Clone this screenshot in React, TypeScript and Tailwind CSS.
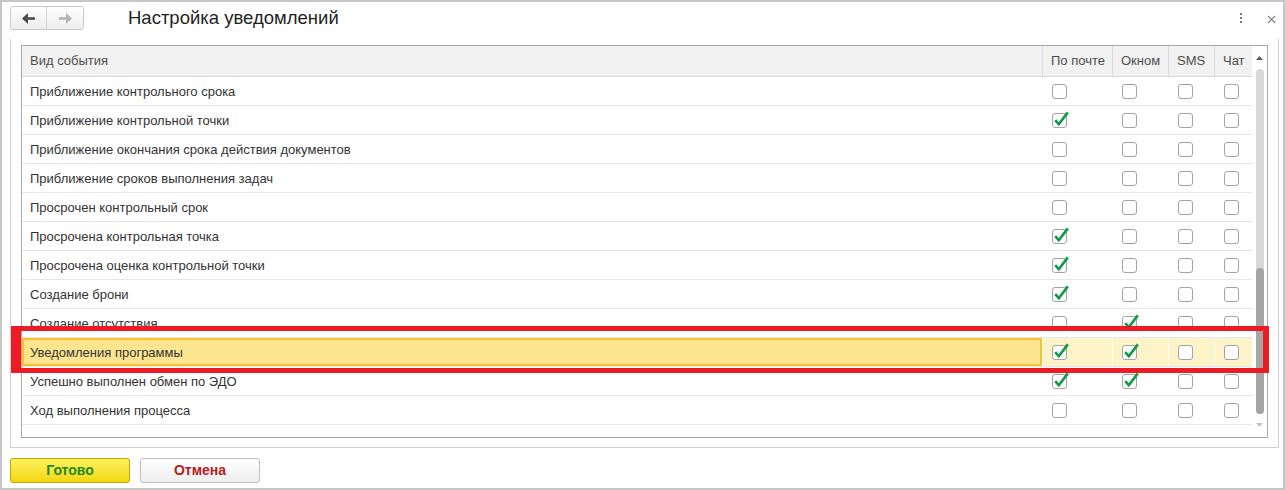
import React from "react";

type Row = { name: string; mail: boolean; win: boolean; sms: boolean; chat: boolean; hl?: boolean };

const rows: Row[] = [
  { name: "Приближение контрольного срока", mail: false, win: false, sms: false, chat: false },
  { name: "Приближение контрольной точки", mail: true, win: false, sms: false, chat: false },
  { name: "Приближение окончания срока действия документов", mail: false, win: false, sms: false, chat: false },
  { name: "Приближение сроков выполнения задач", mail: false, win: false, sms: false, chat: false },
  { name: "Просрочен контрольный срок", mail: false, win: false, sms: false, chat: false },
  { name: "Просрочена контрольная точка", mail: true, win: false, sms: false, chat: false },
  { name: "Просрочена оценка контрольной точки", mail: true, win: false, sms: false, chat: false },
  { name: "Создание брони", mail: true, win: false, sms: false, chat: false },
  { name: "Создание отсутствия", mail: false, win: true, sms: false, chat: false },
  { name: "Уведомления программы", mail: true, win: true, sms: false, chat: false, hl: true },
  { name: "Успешно выполнен обмен по ЭДО", mail: true, win: true, sms: false, chat: false },
  { name: "Ход выполнения процесса", mail: false, win: false, sms: false, chat: false },
];

function Check({ on }: { on: boolean }) {
  return (
    <div className="relative w-[15px] h-[15px] border border-[#a3a3a3] rounded-[3px] bg-white">
      {on && (
        <svg
          className="absolute left-[-1px] top-[-1px] overflow-visible"
          width="15"
          height="15"
          viewBox="0 0 15 15"
        >
          <polyline
            points="3.2,7.2 6.8,11.2 15.8,-0.6"
            fill="none"
            stroke="#13994a"
            strokeWidth="2.7"
          />
        </svg>
      )}
    </div>
  );
}

function Arrow({ dir, color }: { dir: "left" | "right"; color: string }) {
  return (
    <svg width="13" height="11" viewBox="0 0 13 11" style={{ transform: dir === "right" ? "scaleX(-1)" : undefined }}>
      <polygon points="0,5.5 6,0 6,11" fill={color} />
      <rect x="5" y="4.2" width="8" height="2.6" fill={color} />
    </svg>
  );
}

export default function App() {
  return (
    <div className="relative w-[1285px] h-[490px] bg-white border-2 border-[#c6c6c6] flex flex-col font-['Liberation_Sans',Arial,sans-serif] text-[#333] overflow-hidden">
      {/* Top bar */}
      <div className="h-[37px] flex items-start">
        <div className="mt-[4px] ml-[8px] w-[74px] h-[24px] flex border border-[#c9c9c9] rounded-[3px] bg-linear-to-b from-white to-[#ededed]">
          <div className="w-[36px] h-full flex items-center justify-center border-r border-[#d6d6d6]">
            <Arrow dir="left" color="#4b4b4b" />
          </div>
          <div className="flex-1 h-full flex items-center justify-center">
            <Arrow dir="right" color="#b3b3b3" />
          </div>
        </div>
        <div className="ml-[44px] mt-[4px] h-[24px] leading-[24px] text-[18.5px] text-[#1f1f1f]">
          Настройка уведомлений
        </div>
        <div className="ml-auto mt-[11px] flex items-start">
          <div className="flex flex-col gap-[2px] w-[2px] mt-[0px]">
            <div className="w-[2px] h-[2px] bg-[#7a7a7a]" />
            <div className="w-[2px] h-[2px] bg-[#7a7a7a]" />
            <div className="w-[2px] h-[2px] bg-[#7a7a7a]" />
          </div>
          <svg className="ml-[25px] mr-[7px] mt-[2px]" width="9" height="9" viewBox="0 0 9 9">
            <path d="M1 1 L8 8 M8 1 L1 8" stroke="#7d7d7d" strokeWidth="1.1" />
          </svg>
        </div>
      </div>

      {/* Group frame */}
      <div className="ml-[8px] w-[1269px] h-[409px] border-l border-r border-b border-[#cfcfcf] pt-[6px] pl-[10px] pr-[10px] pb-[9px]">
        <div className="w-[1247px] h-[393px] border border-[#a9a9a9] flex">
          <div className="w-[1230px] flex flex-col">
            {/* Header */}
            <div className="h-[31px] flex border-b border-[#d9d9d9] bg-[#f2f2f2] text-[13px] text-[#4d4d4d]">
              <div className="w-[1021px] border-r border-[#dadada] pl-[8px] flex items-center">Вид события</div>
              <div className="w-[70px] border-r border-[#dadada] pl-[8px] flex items-center">По почте</div>
              <div className="w-[56px] border-r border-[#dadada] pl-[8px] flex items-center">Окном</div>
              <div className="w-[46px] border-r border-[#dadada] pl-[8px] flex items-center">SMS</div>
              <div className="w-[37px] pl-[8px] flex items-center">Чат</div>
            </div>
            {/* Rows */}
            {rows.map((r) =>
              r.hl ? (
                <div key={r.name} className="h-[29px] flex border-b border-[#e6e6e6] text-[13px] text-[#333]">
                  <div className="w-[1021px] h-full pr-[1px]">
                    <div className="h-full border-2 border-[#f5c42c] bg-[#fde58f] pl-[6px] pt-[1px] flex items-center">
                      {r.name}
                    </div>
                  </div>
                  <div className="w-[70px] h-full border-r border-white bg-[#fdf3c9] pl-[9px] flex items-center">
                    <Check on={r.mail} />
                  </div>
                  <div className="w-[56px] h-full border-r border-white bg-[#fdf3c9] pl-[9px] flex items-center">
                    <Check on={r.win} />
                  </div>
                  <div className="w-[46px] h-full border-r border-white bg-[#fdf3c9] pl-[9px] flex items-center">
                    <Check on={r.sms} />
                  </div>
                  <div className="w-[37px] h-full bg-[#fdf3c9] pl-[9px] flex items-center">
                    <Check on={r.chat} />
                  </div>
                </div>
              ) : (
                <div key={r.name} className="h-[29px] flex border-b border-[#e6e6e6] text-[13px] text-[#333]">
                  <div className="w-[1021px] pl-[8px] pt-[2px] flex items-center">{r.name}</div>
                  <div className="w-[70px] pl-[9px] flex items-center">
                    <Check on={r.mail} />
                  </div>
                  <div className="w-[56px] pl-[9px] flex items-center">
                    <Check on={r.win} />
                  </div>
                  <div className="w-[46px] pl-[9px] flex items-center">
                    <Check on={r.sms} />
                  </div>
                  <div className="w-[37px] pl-[9px] flex items-center">
                    <Check on={r.chat} />
                  </div>
                </div>
              )
            )}
          </div>
          {/* Scrollbar */}
          <div className="w-[15px] flex flex-col items-center pt-[10px]">
            <svg width="7" height="4" viewBox="0 0 7 4">
              <polygon points="0,4 3.5,0 7,4" fill="#5c5c5c" />
            </svg>
            <div className="mt-[9px] w-[8px] h-[345px] rounded-full bg-[#d9d9d9] flex flex-col justify-end">
              <div className="h-[146px] w-[8px] rounded-full bg-[#a5a5a5]" />
            </div>
            <svg className="mt-[9px]" width="7" height="4" viewBox="0 0 7 4">
              <polygon points="0,0 3.5,4 7,0" fill="#c4c4c4" />
            </svg>
          </div>
        </div>
      </div>

      {/* Footer buttons */}
      <div className="mt-[10px] ml-[8px] flex gap-[10px]">
        <button className="w-[120px] h-[25px] rounded-[3px] border border-[#c2a600] bg-linear-to-b from-[#fff25a] to-[#f3d700] text-[14px] font-bold text-[#1d8a1d] flex items-center justify-center">
          Готово
        </button>
        <button className="w-[120px] h-[25px] rounded-[3px] border border-[#bdbdbd] bg-linear-to-b from-white to-[#ededed] text-[14px] font-bold text-[#b41c22] flex items-center justify-center">
          Отмена
        </button>
      </div>

      {/* Red annotation rectangle */}
      <div className="absolute left-[9px] top-[324px] w-[1258px] h-[47px] border-t-[5px] border-b-[5px] border-l-[10px] border-r-[6px] border-[#ed1c24] pointer-events-none" />
    </div>
  );
}
